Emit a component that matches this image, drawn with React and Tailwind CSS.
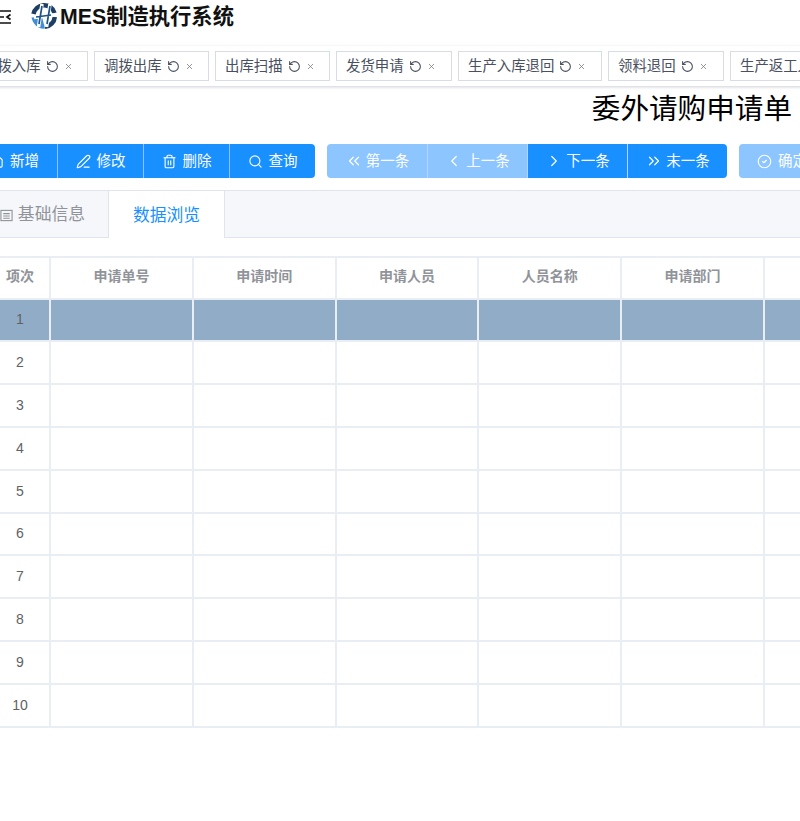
import React from 'react';
import { RotateCw, X, PenLine, Trash2, Search, Home, ChevronsLeft, ChevronLeft, ChevronRight, ChevronsRight, CircleCheck } from 'lucide-react';

const font = 'font-["Liberation_Sans","Noto_Sans_CJK_SC",sans-serif]';

const tabs = [
  { name: '调拨入库', width: 'w-[115px]' },
  { name: '调拨出库', width: 'w-[115px]' },
  { name: '出库扫描', width: 'w-[115px]' },
  { name: '发货申请', width: 'w-[116px]' },
  { name: '生产入库退回', width: 'w-[144px]' },
  { name: '领料退回', width: 'w-[116px]' },
  { name: '生产返工入库', width: 'w-[144px]' },
];

const actions = [
  { name: '新增', icon: Home },
  { name: '修改', icon: PenLine },
  { name: '删除', icon: Trash2 },
  { name: '查询', icon: Search },
];

const pager = [
  { name: '第一条', icon: ChevronsLeft, on: false },
  { name: '上一条', icon: ChevronLeft, on: false },
  { name: '下一条', icon: ChevronRight, on: true },
  { name: '末一条', icon: ChevronsRight, on: true },
];

const columns = ['申请单号', '申请时间', '申请人员', '人员名称', '申请部门', ''];

const Logo = () => (
  <svg viewBox="0 0 28 28" className="w-[28px] h-[28px] shrink-0">
    <path d="M3.500 12A10.800 10.800 0 0 1 24.500 11" fill="none" stroke="#1d3f66" strokeWidth="4.500" />
    <path d="M24.800 15A10.800 10.800 0 0 1 15 24.800" fill="none" stroke="#1d3f66" strokeWidth="4.500" />
    <path d="M1.500 15.500 12 15l3 11.500C8.500 27.500 3 22.500 1.500 15.500z" fill="#3f8ed6" />
    <path d="M12 2 8.500 25M20 2l-3.500 23M4 15.500l20-2.500" stroke="#fff" strokeWidth="3.600" fill="none" />
    <path d="M12 4 9 22M20 4l-3 18M6 15l15-2" stroke="#1f5488" strokeWidth="1.700" fill="none" />
  </svg>
);

const App = () => {
  return (
    <div className={`${font} w-[800px] h-[821px] overflow-hidden bg-white`}>
      {/* Header */}
      <div className="h-[46px] flex items-start pt-[2px]">
        <svg viewBox="0 0 11 14" className="w-[11px] h-[14px] mt-[8px] shrink-0" fill="none" stroke="#111" strokeWidth="1.700">
          <path d="M0 1h11M0 7h4M0 13h11" />
          <path d="M10.500 4.500 7 7l3.500 2.500" />
        </svg>
        <div className="ml-[19px]">
          <Logo />
        </div>
        <div className="ml-[2px] text-[21.3px] leading-[30px] font-bold text-[#111]">MES制造执行系统</div>
      </div>

      {/* Open tabs */}
      <div className="h-[40px] flex items-center gap-[6px] -ml-[27px] w-[900px] shadow-[0_1px_3px_rgba(0,21,41,0.2)]">
        {tabs.map((tab) => (
          <div
            key={tab.name}
            className={`${tab.width} h-[30px] shrink-0 flex items-center pl-[9px] pt-[1px] border border-[#d8dce5] bg-white text-[14.4px] text-[#495060]`}
          >
            <span className="whitespace-nowrap">{tab.name}</span>
            <RotateCw className="w-[13px] h-[13px] ml-[5px] -scale-x-100 text-[#495060]" />
            <X className="w-[9px] h-[9px] ml-[5px] text-[#777]" />
          </div>
        ))}
      </div>

      {/* Title */}
      <div className="h-[58px] pr-[8px] flex items-start justify-end text-[28.6px] leading-[46px] text-black">委外请购申请单</div>

      {/* Toolbar */}
      <div className="h-[34px] flex text-[14.5px] leading-[36px] text-white -ml-[29px] w-[900px]">
        <div className="flex rounded-[4px] overflow-hidden">
          {actions.map((item, i) => {
            const Icon = item.icon;
            return (
              <div
                key={item.name}
                className={`w-[86px] flex items-center justify-center gap-[6px] bg-[#1890ff] ${i > 0 ? 'border-l border-[#8cc5ff]' : ''}`}
              >
                <Icon className="w-[15px] h-[15px]" strokeWidth={1.8} />
                <span>{item.name}</span>
              </div>
            );
          })}
        </div>
        <div className="flex rounded-[4px] overflow-hidden ml-[12px]">
          {pager.map((item, i) => {
            const Icon = item.icon;
            return (
              <div
                key={item.name}
                className={`w-[100px] flex items-center justify-center gap-[3px] ${item.on ? 'bg-[#1890ff]' : 'bg-[#8cc5ff]'} ${i > 0 ? 'border-l border-[#b3d8ff]' : ''}`}
              >
                <Icon className="w-[18px] h-[18px]" strokeWidth={1.6} />
                <span>{item.name}</span>
              </div>
            );
          })}
        </div>
        <div className="ml-[12px] w-[86px] rounded-[4px] bg-[#8cc5ff] flex items-center justify-center gap-[6px]">
          <CircleCheck className="w-[15px] h-[15px]" strokeWidth={1.8} />
          <span className="whitespace-nowrap">确定</span>
        </div>
      </div>

      {/* Section tabs */}
      <div className="mt-[12px] h-[48px] flex bg-[#f5f7fa] border-y border-[#dfe4ed] text-[16.8px]">
        <div className="w-[109px] pt-[2px] flex items-center justify-end pr-[23px] gap-[5px] text-[#909399] border-r border-[#dfe4ed] whitespace-nowrap">
          <svg viewBox="0 0 14 14" className="w-[13px] h-[13px] shrink-0" fill="none" stroke="#909399" strokeWidth="1.200">
            <rect x="1" y="1.500" width="12" height="11" />
            <path d="M3.500 5h7M3.500 7.500h7M3.500 10h7" />
          </svg>
          <span>基础信息</span>
        </div>
        <div className="w-[116px] -mb-px pt-[3px] flex items-center justify-center bg-white text-[#1890ff] border-r border-[#dfe4ed]">数据浏览</div>
      </div>

      {/* Table */}
      <div className="mt-[18px] -ml-[9px] w-[1000px] border-t-2 border-[#e9eef4]">
        <div className="flex h-[41.6px] border-b-2 border-[#e9eef4] text-[14px] font-bold text-[#909399]">
          <div className="w-[60px] pb-[2px] flex items-center justify-center border-r-2 border-[#e9eef4]">项次</div>
          {columns.map((col, i) => (
            <div key={i} className="w-[142.8px] pb-[2px] flex items-center justify-center border-r-2 border-[#e9eef4]">{col}</div>
          ))}
        </div>
        {Array.from({ length: 10 }, (_, r) => (
          <div
            key={r}
            className={`flex h-[42.8px] border-b-2 border-[#e9eef4] text-[14px] text-[#606266] ${r === 0 ? 'bg-[#91acc6]' : ''}`}
          >
            <div className="w-[60px] flex items-center justify-center border-r-2 border-[#e9eef4]">{r + 1}</div>
            {columns.map((_col, i) => (
              <div key={i} className="w-[142.8px] border-r-2 border-[#e9eef4]" />
            ))}
          </div>
        ))}
      </div>
    </div>
  );
};

export default App;
